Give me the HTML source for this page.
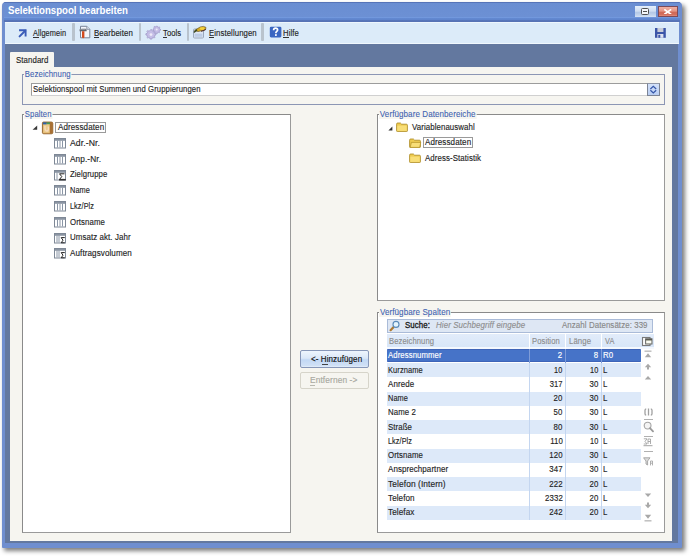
<!DOCTYPE html>
<html><head><meta charset="utf-8">
<style>
*{box-sizing:border-box}
html,body{margin:0;padding:0}
body{width:692px;height:559px;background:#fff;position:relative;overflow:hidden;font-family:"Liberation Sans",sans-serif;font-size:8px;color:#1e1e1e}
.a{position:absolute}
.t{position:absolute;white-space:nowrap;line-height:10px;font-size:9.2px;letter-spacing:0.1px;-webkit-text-stroke:.15px}
#win{left:2px;top:2px;width:679.6px;height:546.2px;background:#6f8ecf;border-radius:4px 4px 1px 1px;box-shadow:2.5px 3px 4px rgba(0,0,0,.5)}
#title{left:2px;top:1px;width:675.6px;height:19px;background:linear-gradient(#6a8ed2,#6c90d4 72%,#7399de 76%,#6289d2 80%,#5f84cc 88%,#546eb0 94%,#5a76b8)}
#tb{left:5px;top:21.5px;width:674.3px;height:22.5px;background:#dcebf9;border-top:1px solid #eef6fd;border-bottom:1px solid #f0f7fd}
#client{left:4.7px;top:44px;width:673.1px;height:499.3px;background:#63789f}
#page{left:10px;top:66.5px;width:662px;height:474.2px;background:#f6f5f0}
#tab{left:10px;top:52px;width:43.6px;height:15px;background:#f6f5f0;border-radius:1px 1px 0 0}
.grp{position:absolute;border:1px solid #8a8f98}
.gt{position:absolute;white-space:nowrap;line-height:10px;font-size:9.2px;letter-spacing:0.1px;-webkit-text-stroke:.1px;color:#3f63b0;background:#f6f5f0;padding:0 1px}
.sep{position:absolute;top:23px;width:2.6px;height:17.5px;background:#b9c3cd;border-radius:1px}
.u{text-decoration:underline}
</style></head><body>
<div id="win" class="a">
  <div id="title" class="a"></div>
  <div class="a" style="left:2px;top:0;width:675.6px;height:1px;background:#5674b8;border-radius:3px 3px 0 0"></div>
</div>
<div class="t" style="left:7.9px;top:4.5px;font-size:10.2px;font-weight:bold;color:#fff;line-height:11px;letter-spacing:0;-webkit-text-stroke:0;transform:scaleX(.946);transform-origin:0 0">Selektionspool bearbeiten</div>
<!-- window buttons -->
<div class="a" style="left:634.9px;top:5.9px;width:20.9px;height:10.8px;background:linear-gradient(#e4eefa,#d0def2 45%,#b4c8e6 60%,#c4d6ee 85%,#d8e4f4)"></div>
<div class="a" style="left:641px;top:8.4px;width:7.6px;height:6.2px;border:1.3px solid #505050;border-radius:1.5px;background:#f4f6fa"></div>
<div class="a" style="left:643px;top:10.9px;width:3.6px;height:1.4px;background:#505050"></div>
<div class="a" style="left:657.6px;top:6.3px;width:20.6px;height:10.8px;border:1px solid #7c4a58;background:linear-gradient(#eeb0a4,#e49484 45%,#d06a58 60%,#d46e5c 85%,#e09080)"></div>
<svg class="a" style="left:664.4px;top:8.6px" width="7.5" height="5.8" viewBox="0 0 7.5 5.8"><path d="M1 .9L6.5 4.9M6.5 .9L1 4.9" stroke="#fff" stroke-width="1.7" stroke-linecap="square"/></svg>
<div id="tb" class="a"></div>

<!-- toolbar items -->
<div class="sep" style="left:72.2px"></div>
<div class="sep" style="left:138.9px"></div>
<div class="sep" style="left:186.6px"></div>
<div class="sep" style="left:261.4px"></div>
<svg class="a" style="left:17px;top:27px" width="12" height="12" viewBox="0 0 12 12"><path d="M3 3.3H8.6V8.6" fill="none" stroke="#3a5cb8" stroke-width="1.9" stroke-linecap="square"/><path d="M8.2 3.8L2.6 9.4" stroke="#3a5cb8" stroke-width="2" stroke-linecap="round"/></svg>
<div class="t" style="left:33.2px;transform-origin:0 0;top:27.86px;transform:scaleX(0.802);">Allgemein</div>
<div class="a" style="left:33.2px;top:36.8px;width:5.5px;height:1px;background:#333"></div>
<svg class="a" style="left:78px;top:25px" width="14" height="15" viewBox="0 0 14 15"><path d="M2.5 1.3H8.8L11.8 4.3V12.8H2.5Z" fill="#f4f6fc" stroke="#7a8498" stroke-width="1"/><path d="M8.8 1.3V4.3H11.8" fill="#dfe4ee" stroke="#7a8498" stroke-width=".8"/><path d="M1.6 4.2Q3 3.6 5 3.8H7.6Q8.6 4 8.6 5.2V6.2H1.6Z" fill="#5e6168"/><path d="M2.2 4.6H7.6" stroke="#b8bcc4" stroke-width=".6"/><path d="M4 6.2H6.4V12.4Q5.2 14 4 12.4Z" fill="#d24a1e"/></svg>
<div class="t" style="left:94.3px;transform-origin:0 0;top:27.86px;transform:scaleX(0.856);">Bearbeiten</div>
<div class="a" style="left:94.3px;top:36.8px;width:5px;height:1px;background:#333"></div>
<svg class="a" style="left:144px;top:25px" width="18" height="15" viewBox="0 0 18 15"><g fill="#c4bde6" stroke="#9c94c4" stroke-width=".7"><path d="M6.6 4.8l1.1-.2.4 1.2 1 .4 1-.6.9.8-.6 1 .4 1 1.2.3v1.2l-1.2.3-.4 1 .6 1-.8.9-1-.6-1 .4-.3 1.2H6.1l-.3-1.2-1-.4-1 .6-.9-.8.6-1-.4-1-1.2-.3V8.7l1.2-.3.4-1-.6-1 .8-.9 1 .6 1-.4z"/><path d="M12.3 1.2l.9-.1.3.9.8.3.8-.5.7.6-.5.8.3.8.9.3v.9l-.9.3-.3.8.5.8-.6.7-.8-.5-.8.3-.3.9h-.9l-.3-.9-.8-.3-.8.5-.7-.6.5-.8-.3-.8-.9-.3V4l.9-.3.3-.8-.5-.8.6-.7.8.5.8-.3z"/></g><circle cx="7" cy="9.6" r="1.4" fill="#eeeaf8"/><circle cx="12.7" cy="4.6" r="1" fill="#eeeaf8"/></svg>
<div class="t" style="left:162.8px;transform-origin:0 0;top:27.86px;transform:scaleX(0.827);">Tools</div>
<div class="a" style="left:162.8px;top:36.8px;width:4.6px;height:1px;background:#333"></div>
<svg class="a" style="left:192px;top:24px" width="16" height="16" viewBox="0 0 16 16"><rect x="1.5" y="5" width="10" height="9" rx="1" fill="#dfe8f4" stroke="#9aa8bc" stroke-width="1"/><rect x="2.5" y="9.6" width="8" height="3.2" fill="#bccde6"/><path d="M2.6 6.5L5.5 4.6Q8 2.4 11.5 2.4L14 3.4 13.6 5.4Q11 7 8.5 7L6 7.6Z" fill="#d8ae22" stroke="#5e4a1c" stroke-width=".6"/><ellipse cx="10.2" cy="4.6" rx="2.4" ry="1.4" fill="#f2d040"/><path d="M2.4 8L4.6 6.2" stroke="#3a4a22" stroke-width="1.6" stroke-linecap="round"/><path d="M9 7.2Q11.5 7 13.8 5.4" stroke="#4a2a30" stroke-width="1.1" fill="none"/></svg>
<div class="t" style="left:208.6px;transform-origin:0 0;top:27.86px;transform:scaleX(0.846);">Einstellungen</div>
<div class="a" style="left:208.6px;top:36.8px;width:5px;height:1px;background:#333"></div>
<svg class="a" style="left:268.5px;top:26.3px" width="13" height="12" viewBox="0 0 13 12"><rect x=".8" y=".7" width="11.6" height="10.7" rx="1.4" fill="#3a66c2"/><path d="M4.6 4.2C4.6 2.8 5.5 2.1 6.6 2.1S8.6 2.8 8.6 4C8.6 5.3 6.9 5.5 6.9 6.8V7.2" fill="none" stroke="#fff" stroke-width="1.7"/><rect x="6" y="8.2" width="1.8" height="1.7" fill="#fff"/></svg>
<div class="t" style="left:283.3px;transform-origin:0 0;top:27.86px;transform:scaleX(0.842);">Hilfe</div>
<div class="a" style="left:283.3px;top:36.8px;width:5.6px;height:1px;background:#333"></div>
<svg class="a" style="left:653.5px;top:27px" width="13" height="12" viewBox="0 0 13 12"><path d="M1 1H11.8V10.8H1Z" fill="#3b55a8"/><rect x="3.4" y="1" width="6" height="4" fill="#c8ccd8"/><rect x="3.4" y="7" width="6" height="3.8" fill="#dde2f0"/><rect x="4.3" y="7.8" width="2" height="3" fill="#3b55a8"/></svg>
<div id="client" class="a"></div>
<div id="tab" class="a"></div>
<div id="page" class="a"></div>

<div class="t" style="left:16.2px;transform-origin:0 0;top:54.96px;transform:scaleX(0.853);color:#1e1e1e">Standard</div>
<!-- Bezeichnung group -->
<div class="grp" style="left:21.8px;top:74px;width:643.2px;height:30.9px;border-color:#8c96b4"></div>
<div class="gt" style="left:24.2px;transform-origin:0 0;top:68.76px;transform:scaleX(0.847);">Bezeichnung</div>
<div class="a" style="left:31.3px;top:83px;width:628.3px;height:12.6px;background:#fff;border:1px solid #9c9c9c;border-right-color:#c8c8c8;border-bottom-color:#d0d0d0"></div>
<div class="t" style="left:33px;transform-origin:0 0;top:84.06px;transform:scaleX(0.838);">Selektionspool mit Summen und Gruppierungen</div>
<div class="a" style="left:647px;top:83px;width:12.6px;height:12.6px;background:linear-gradient(#d4e2fa,#b8cdf2);border:1px solid #7c8494;border-top-color:#9098a8"></div><svg class="a" style="left:649px;top:85px" width="9" height="9" viewBox="0 0 9 9"><path d="M1.4 4L4.3 1.3 7.2 4M1.4 5.2L4.3 7.9 7.2 5.2" fill="none" stroke="#3456a8" stroke-width="1.2"/></svg>
<!-- Spalten group -->
<div class="grp" style="left:22.2px;top:114.3px;width:268.5px;height:418.3px;background:#fff;border-color:#8a8a8a #9a9a9a #9a9a9a #8a8a8a"></div>
<div class="gt" style="left:24.1px;transform-origin:0 0;top:108.76px;transform:scaleX(0.838);">Spalten</div>
<!-- Datenbereiche group -->
<div class="grp" style="left:377px;top:114.3px;width:287.7px;height:186.7px;background:#fff;border-color:#8a8a8a #9a9a9a #9a9a9a #8a8a8a"></div>
<div class="gt" style="left:379.2px;transform-origin:0 0;top:108.76px;transform:scaleX(0.872);">Verfügbare Datenbereiche</div>
<!-- Spalten grid group -->
<div class="grp" style="left:377px;top:312.4px;width:287.7px;height:220.3px;background:#fff;border-color:#8a8a8a #9a9a9a #9a9a9a #8a8a8a"></div>
<div class="gt" style="left:379.1px;transform-origin:0 0;top:306.76px;transform:scaleX(0.875);">Verfügbare Spalten</div>

<!--CONTENT-->
<svg class="a" style="left:32px;top:125px" width="6" height="6"><path d="M5.2 .6V4.8H.6Z" fill="#383838"/></svg>
<svg class="a" style="left:41px;top:120.5px" width="13" height="14" viewBox="0 0 13 14"><path d="M1.4 2.2Q1.4 1 2.6 1H10.2Q11.8 1 11.8 2.4V11.6Q11.8 12.8 10.4 12.8H2.8Q1.4 12.8 1.4 11.6Z" fill="#b8803c" stroke="#8a5a22" stroke-width=".8"/><path d="M2 2.6H8.8V12.2H2Z" fill="#e2b870"/><path d="M2.6 3.2H8.2V11.4H2.6Z" fill="#eccb8c"/><path d="M9 2H11.2V12.2H9Z" fill="#a87034"/><path d="M2 1.4H5.6V3.4H2Z" fill="#2c62ae"/><path d="M5.6 1.4H9V3.2H5.6Z" fill="#42985a"/><path d="M4 5Q3.6 9.8 6 10Q8 9.6 7.2 5.6" fill="none" stroke="#f6dcc0" stroke-width="1.3"/></svg>
<div class="a" style="left:55.4px;top:121.7px;width:50.6px;height:11px;border:1px solid #9a9a9a"></div>
<div class="t" style="left:57.9px;transform-origin:0 0;top:121.61px;transform:scaleX(0.877);">Adressdaten</div>
<svg class="a" style="left:54px;top:138.10px" width="13" height="11" viewBox="0 0 13 11"><rect x=".5" y=".5" width="11" height="9.5" fill="#fff" stroke="#7e8896"/><rect x="1" y="1" width="10" height="1.8" fill="#8a94a2"/><path d="M3.5 2.5V9.5M6 2.5V9.5M8.5 2.5V9.5" stroke="#8a96a6" stroke-width="1"/></svg>
<div class="t" style="left:70.4px;transform-origin:0 0;top:137.81px;transform:scaleX(0.942);">Adr.-Nr.</div>
<svg class="a" style="left:54px;top:153.84px" width="13" height="11" viewBox="0 0 13 11"><rect x=".5" y=".5" width="11" height="9.5" fill="#fff" stroke="#7e8896"/><rect x="1" y="1" width="10" height="1.8" fill="#8a94a2"/><path d="M3.5 2.5V9.5M6 2.5V9.5M8.5 2.5V9.5" stroke="#8a96a6" stroke-width="1"/></svg>
<div class="t" style="left:70.4px;transform-origin:0 0;top:153.55px;transform:scaleX(0.900);">Anp.-Nr.</div>
<svg class="a" style="left:54px;top:169.58px" width="13" height="11" viewBox="0 0 13 11"><rect x=".5" y=".5" width="11" height="9.5" fill="#fff" stroke="#7e8896"/><rect x="1" y="1" width="10" height="1.8" fill="#8a94a2"/><path d="M3 2.5V9.5" stroke="#8a96a6" stroke-width="1"/><path d="M10.5 3.8H5.5L7.8 6.6 5.5 9.4H10.5" fill="none" stroke="#222" stroke-width="1"/><rect x="5" y="9" width="6.8" height="1.5" fill="#333"/></svg>
<div class="t" style="left:70.4px;transform-origin:0 0;top:169.29px;transform:scaleX(0.841);">Zielgruppe</div>
<svg class="a" style="left:54px;top:185.32px" width="13" height="11" viewBox="0 0 13 11"><rect x=".5" y=".5" width="11" height="9.5" fill="#fff" stroke="#7e8896"/><rect x="1" y="1" width="10" height="1.8" fill="#8a94a2"/><path d="M3.5 2.5V9.5M6 2.5V9.5M8.5 2.5V9.5" stroke="#8a96a6" stroke-width="1"/></svg>
<div class="t" style="left:70.4px;transform-origin:0 0;top:185.03px;transform:scaleX(0.800);">Name</div>
<svg class="a" style="left:54px;top:201.06px" width="13" height="11" viewBox="0 0 13 11"><rect x=".5" y=".5" width="11" height="9.5" fill="#fff" stroke="#7e8896"/><rect x="1" y="1" width="10" height="1.8" fill="#8a94a2"/><path d="M3.5 2.5V9.5M6 2.5V9.5M8.5 2.5V9.5" stroke="#8a96a6" stroke-width="1"/></svg>
<div class="t" style="left:70.4px;transform-origin:0 0;top:200.77px;transform:scaleX(0.790);">Lkz/Plz</div>
<svg class="a" style="left:54px;top:216.80px" width="13" height="11" viewBox="0 0 13 11"><rect x=".5" y=".5" width="11" height="9.5" fill="#fff" stroke="#7e8896"/><rect x="1" y="1" width="10" height="1.8" fill="#8a94a2"/><path d="M3.5 2.5V9.5M6 2.5V9.5M8.5 2.5V9.5" stroke="#8a96a6" stroke-width="1"/></svg>
<div class="t" style="left:70.4px;transform-origin:0 0;top:216.51px;transform:scaleX(0.850);">Ortsname</div>
<svg class="a" style="left:54px;top:232.54px" width="13" height="11" viewBox="0 0 13 11"><rect x=".5" y=".5" width="11" height="9.5" fill="#fff" stroke="#7e8896"/><rect x="1" y="1" width="10" height="1.8" fill="#8a94a2"/><path d="M3 2.5V9.5M5 2.5V9.5" stroke="#8a96a6" stroke-width="1"/><path d="M10.8 4.6H7.2L9 7.2 7.2 9.8H10.8" fill="none" stroke="#222" stroke-width="1"/></svg>
<div class="t" style="left:70.4px;transform-origin:0 0;top:232.25px;transform:scaleX(0.860);">Umsatz akt. Jahr</div>
<svg class="a" style="left:54px;top:248.28px" width="13" height="11" viewBox="0 0 13 11"><rect x=".5" y=".5" width="11" height="9.5" fill="#fff" stroke="#7e8896"/><rect x="1" y="1" width="10" height="1.8" fill="#8a94a2"/><path d="M3 2.5V9.5M5 2.5V9.5" stroke="#8a96a6" stroke-width="1"/><path d="M10.8 4.6H7.2L9 7.2 7.2 9.8H10.8" fill="none" stroke="#222" stroke-width="1"/></svg>
<div class="t" style="left:70.4px;transform-origin:0 0;top:247.99px;transform:scaleX(0.879);">Auftragsvolumen</div>
<svg class="a" style="left:387.5px;top:126px" width="5" height="5"><path d="M4.4 .4V4.4H.4Z" fill="#303030"/></svg>
<svg class="a" style="left:395.5px;top:122px" width="12" height="10" viewBox="0 0 12 10"><path d="M.6 2.2Q.6 1 1.6 1H4.4L5.6 2.2H10.4Q11.4 2.2 11.4 3.2V8.8Q11.4 9.6 10.6 9.6H1.4Q.6 9.6 .6 8.8Z" fill="#eecb50" stroke="#a8861e" stroke-width=".8"/><path d="M1.3 3.6H10.7V8.9H1.3Z" fill="#f8de78"/></svg>
<div class="t" style="left:412.3px;transform-origin:0 0;top:121.61px;transform:scaleX(0.855);">Variablenauswahl</div>
<svg class="a" style="left:409px;top:137.5px" width="13" height="10" viewBox="0 0 13 10"><path d="M.6 2.2Q.6 1 1.6 1H4.4L5.6 2.2H10.4Q11.4 2.2 11.4 3.2V8.8Q11.4 9.6 10.6 9.6H1.4Q.6 9.6 .6 8.8Z" fill="#eecb50" stroke="#a8861e" stroke-width=".8"/><path d="M2.4 4.4H11.8L10.6 9.4H1.2Z" fill="#f8de78" stroke="#a8861e" stroke-width=".6"/></svg>
<div class="a" style="left:423.2px;top:137px;width:50.2px;height:11.2px;border:1px solid #9a9a9a"></div>
<div class="t" style="left:424.8px;transform-origin:0 0;top:137.21px;transform:scaleX(0.877);">Adressdaten</div>
<svg class="a" style="left:409px;top:153px" width="12" height="10" viewBox="0 0 12 10"><path d="M.6 2.2Q.6 1 1.6 1H4.4L5.6 2.2H10.4Q11.4 2.2 11.4 3.2V8.8Q11.4 9.6 10.6 9.6H1.4Q.6 9.6 .6 8.8Z" fill="#eecb50" stroke="#a8861e" stroke-width=".8"/><path d="M1.3 3.6H10.7V8.9H1.3Z" fill="#f8de78"/></svg>
<div class="t" style="left:425.3px;transform-origin:0 0;top:152.81px;transform:scaleX(0.857);">Adress-Statistik</div>
<div class="a" style="left:300.2px;top:350.2px;width:68.8px;height:17.7px;border:1px solid #8797b8;border-radius:2px;background:linear-gradient(#eef5fd,#dbe8f8 45%,#c2d8f4 55%,#cfe0f6 90%,#e4eefa)"></div>
<div class="t" style="left:310.6px;transform-origin:0 0;top:354.11px;transform:scaleX(0.871);color:#111">&lt;- Hinzufügen</div>
<div class="a" style="left:322px;top:363.6px;width:5.5px;height:1px;background:#444"></div>
<div class="a" style="left:300.2px;top:371.6px;width:68.8px;height:17.3px;border:1px solid #d6d4ca;border-radius:2px;background:#f6f5f0"></div>
<div class="t" style="left:310.0px;transform-origin:0 0;top:375.01px;transform:scaleX(0.912);color:#a8a8a0">Entfernen -&gt;</div>
<div class="a" style="left:310px;top:384.6px;width:5px;height:1px;background:#b8b8b0"></div>
<div class="a" style="left:387.2px;top:319px;width:265.8px;height:13.8px;background:#dee7f4;border:1px solid #aabbd8"></div>
<svg class="a" style="left:389px;top:320px" width="11" height="12" viewBox="0 0 11 12"><path d="M4.4 7.2L1.6 10.2" stroke="#b07a30" stroke-width="2.2" stroke-linecap="round"/><circle cx="7" cy="4.4" r="3" fill="#e4f4fc" stroke="#5a8ab8" stroke-width="1.1"/></svg>
<div class="t" style="left:405.2px;transform-origin:0 0;top:320.41px;transform:scaleX(0.855);color:#1a1a1a;-webkit-text-stroke:.35px">Suche:</div>
<div class="t" style="left:436px;transform-origin:0 0;top:320.41px;transform:scaleX(0.861);font-style:italic;color:#8e8e8e">Hier Suchbegriff eingebe</div>
<div class="t" style="left:562px;transform-origin:0 0;top:320.41px;transform:scaleX(0.858);color:#888">Anzahl Datensätze: 339</div>
<div class="a" style="left:387.2px;top:333.7px;width:267px;height:15.1px;background:linear-gradient(#e2ecfa,#d8e6f8 85%,#f4f8fe 90%)"></div>
<div class="a" style="left:528.9px;top:333.7px;width:1px;height:15.1px;background:#fff"></div>
<div class="a" style="left:565.4px;top:333.7px;width:1px;height:15.1px;background:#fff"></div>
<div class="a" style="left:601.1px;top:333.7px;width:1px;height:15.1px;background:#fff"></div>
<div class="t" style="left:389.2px;transform-origin:0 0;top:335.71px;transform:scaleX(0.831);color:#8c8c8c">Bezeichnung</div>
<div class="t" style="left:531.5px;transform-origin:0 0;top:335.71px;transform:scaleX(0.830);color:#8c8c8c">Position</div>
<div class="t" style="left:568.9px;transform-origin:0 0;top:335.71px;transform:scaleX(0.846);color:#8c8c8c">Länge</div>
<div class="t" style="left:605.3px;transform-origin:0 0;top:335.71px;transform:scaleX(0.800);color:#8c8c8c">VA</div>
<div class="a" style="left:387.2px;top:348.80px;width:254.3px;height:13.65px;background:#4673c8;border-top:1px solid #3e64b8;border-bottom:1px solid #3e64b8;border-radius:1px"></div>
<div class="a" style="left:528.9px;top:348.80px;width:1px;height:14.25px;background:#7e9cd8"></div>
<div class="a" style="left:565.4px;top:348.80px;width:1px;height:14.25px;background:#7e9cd8"></div>
<div class="a" style="left:601.1px;top:348.80px;width:1px;height:14.25px;background:#7e9cd8"></div>
<div class="t" style="left:387.8px;transform-origin:0 0;top:350.41px;transform:scaleX(0.844);color:#fff">Adressnummer</div>
<div class="t" style="right:129.5px;transform-origin:100% 0;top:350.41px;transform:scaleX(0.853);color:#fff">2</div>
<div class="t" style="right:93.5px;transform-origin:100% 0;top:350.41px;transform:scaleX(0.853);color:#fff">8</div>
<div class="t" style="left:603.4px;transform-origin:0 0;top:350.41px;transform:scaleX(0.853);color:#fff">R0</div>
<div class="a" style="left:387.2px;top:363.05px;width:254.3px;height:14.25px;background:#dde9f9"></div>
<div class="a" style="left:528.9px;top:363.05px;width:1px;height:14.25px;background:#c4d6f0"></div>
<div class="a" style="left:565.4px;top:363.05px;width:1px;height:14.25px;background:#c4d6f0"></div>
<div class="a" style="left:601.1px;top:363.05px;width:1px;height:14.25px;background:#c4d6f0"></div>
<div class="t" style="left:387.8px;transform-origin:0 0;top:364.66px;transform:scaleX(0.814);color:#1e1e1e">Kurzname</div>
<div class="t" style="right:129.5px;transform-origin:100% 0;top:364.66px;transform:scaleX(0.800);color:#1e1e1e">10</div>
<div class="t" style="right:93.5px;transform-origin:100% 0;top:364.66px;transform:scaleX(0.800);color:#1e1e1e">10</div>
<div class="t" style="left:603.4px;transform-origin:0 0;top:364.66px;transform:scaleX(0.853);color:#1e1e1e">L</div>
<div class="a" style="left:387.2px;top:377.30px;width:254.3px;height:14.25px;background:#ffffff"></div>
<div class="a" style="left:528.9px;top:377.30px;width:1px;height:14.25px;background:#c4d6f0"></div>
<div class="a" style="left:565.4px;top:377.30px;width:1px;height:14.25px;background:#c4d6f0"></div>
<div class="a" style="left:601.1px;top:377.30px;width:1px;height:14.25px;background:#c4d6f0"></div>
<div class="t" style="left:387.8px;transform-origin:0 0;top:378.91px;transform:scaleX(0.867);color:#1e1e1e">Anrede</div>
<div class="t" style="right:129.5px;transform-origin:100% 0;top:378.91px;transform:scaleX(0.825);color:#1e1e1e">317</div>
<div class="t" style="right:93.5px;transform-origin:100% 0;top:378.91px;transform:scaleX(0.853);color:#1e1e1e">30</div>
<div class="t" style="left:603.4px;transform-origin:0 0;top:378.91px;transform:scaleX(0.853);color:#1e1e1e">L</div>
<div class="a" style="left:387.2px;top:391.55px;width:254.3px;height:14.25px;background:#dde9f9"></div>
<div class="a" style="left:528.9px;top:391.55px;width:1px;height:14.25px;background:#c4d6f0"></div>
<div class="a" style="left:565.4px;top:391.55px;width:1px;height:14.25px;background:#c4d6f0"></div>
<div class="a" style="left:601.1px;top:391.55px;width:1px;height:14.25px;background:#c4d6f0"></div>
<div class="t" style="left:387.8px;transform-origin:0 0;top:393.16px;transform:scaleX(0.800);color:#1e1e1e">Name</div>
<div class="t" style="right:129.5px;transform-origin:100% 0;top:393.16px;transform:scaleX(0.853);color:#1e1e1e">20</div>
<div class="t" style="right:93.5px;transform-origin:100% 0;top:393.16px;transform:scaleX(0.853);color:#1e1e1e">30</div>
<div class="t" style="left:603.4px;transform-origin:0 0;top:393.16px;transform:scaleX(0.853);color:#1e1e1e">L</div>
<div class="a" style="left:387.2px;top:405.80px;width:254.3px;height:14.25px;background:#ffffff"></div>
<div class="a" style="left:528.9px;top:405.80px;width:1px;height:14.25px;background:#c4d6f0"></div>
<div class="a" style="left:565.4px;top:405.80px;width:1px;height:14.25px;background:#c4d6f0"></div>
<div class="a" style="left:601.1px;top:405.80px;width:1px;height:14.25px;background:#c4d6f0"></div>
<div class="t" style="left:387.8px;transform-origin:0 0;top:407.41px;transform:scaleX(0.853);color:#1e1e1e">Name 2</div>
<div class="t" style="right:129.5px;transform-origin:100% 0;top:407.41px;transform:scaleX(0.853);color:#1e1e1e">50</div>
<div class="t" style="right:93.5px;transform-origin:100% 0;top:407.41px;transform:scaleX(0.853);color:#1e1e1e">30</div>
<div class="t" style="left:603.4px;transform-origin:0 0;top:407.41px;transform:scaleX(0.853);color:#1e1e1e">L</div>
<div class="a" style="left:387.2px;top:420.05px;width:254.3px;height:14.25px;background:#dde9f9"></div>
<div class="a" style="left:528.9px;top:420.05px;width:1px;height:14.25px;background:#c4d6f0"></div>
<div class="a" style="left:565.4px;top:420.05px;width:1px;height:14.25px;background:#c4d6f0"></div>
<div class="a" style="left:601.1px;top:420.05px;width:1px;height:14.25px;background:#c4d6f0"></div>
<div class="t" style="left:387.8px;transform-origin:0 0;top:421.66px;transform:scaleX(0.850);color:#1e1e1e">Straße</div>
<div class="t" style="right:129.5px;transform-origin:100% 0;top:421.66px;transform:scaleX(0.853);color:#1e1e1e">80</div>
<div class="t" style="right:93.5px;transform-origin:100% 0;top:421.66px;transform:scaleX(0.853);color:#1e1e1e">30</div>
<div class="t" style="left:603.4px;transform-origin:0 0;top:421.66px;transform:scaleX(0.853);color:#1e1e1e">L</div>
<div class="a" style="left:387.2px;top:434.30px;width:254.3px;height:14.25px;background:#ffffff"></div>
<div class="a" style="left:528.9px;top:434.30px;width:1px;height:14.25px;background:#c4d6f0"></div>
<div class="a" style="left:565.4px;top:434.30px;width:1px;height:14.25px;background:#c4d6f0"></div>
<div class="a" style="left:601.1px;top:434.30px;width:1px;height:14.25px;background:#c4d6f0"></div>
<div class="t" style="left:387.8px;transform-origin:0 0;top:435.91px;transform:scaleX(0.790);color:#1e1e1e">Lkz/Plz</div>
<div class="t" style="right:129.5px;transform-origin:100% 0;top:435.91px;transform:scaleX(0.853);color:#1e1e1e">110</div>
<div class="t" style="right:93.5px;transform-origin:100% 0;top:435.91px;transform:scaleX(0.800);color:#1e1e1e">10</div>
<div class="t" style="left:603.4px;transform-origin:0 0;top:435.91px;transform:scaleX(0.853);color:#1e1e1e">L</div>
<div class="a" style="left:387.2px;top:448.55px;width:254.3px;height:14.25px;background:#dde9f9"></div>
<div class="a" style="left:528.9px;top:448.55px;width:1px;height:14.25px;background:#c4d6f0"></div>
<div class="a" style="left:565.4px;top:448.55px;width:1px;height:14.25px;background:#c4d6f0"></div>
<div class="a" style="left:601.1px;top:448.55px;width:1px;height:14.25px;background:#c4d6f0"></div>
<div class="t" style="left:387.8px;transform-origin:0 0;top:450.16px;transform:scaleX(0.850);color:#1e1e1e">Ortsname</div>
<div class="t" style="right:129.5px;transform-origin:100% 0;top:450.16px;transform:scaleX(0.853);color:#1e1e1e">120</div>
<div class="t" style="right:93.5px;transform-origin:100% 0;top:450.16px;transform:scaleX(0.853);color:#1e1e1e">30</div>
<div class="t" style="left:603.4px;transform-origin:0 0;top:450.16px;transform:scaleX(0.853);color:#1e1e1e">L</div>
<div class="a" style="left:387.2px;top:462.80px;width:254.3px;height:14.25px;background:#ffffff"></div>
<div class="a" style="left:528.9px;top:462.80px;width:1px;height:14.25px;background:#c4d6f0"></div>
<div class="a" style="left:565.4px;top:462.80px;width:1px;height:14.25px;background:#c4d6f0"></div>
<div class="a" style="left:601.1px;top:462.80px;width:1px;height:14.25px;background:#c4d6f0"></div>
<div class="t" style="left:387.8px;transform-origin:0 0;top:464.41px;transform:scaleX(0.867);color:#1e1e1e">Ansprechpartner</div>
<div class="t" style="right:129.5px;transform-origin:100% 0;top:464.41px;transform:scaleX(0.853);color:#1e1e1e">347</div>
<div class="t" style="right:93.5px;transform-origin:100% 0;top:464.41px;transform:scaleX(0.853);color:#1e1e1e">30</div>
<div class="t" style="left:603.4px;transform-origin:0 0;top:464.41px;transform:scaleX(0.853);color:#1e1e1e">L</div>
<div class="a" style="left:387.2px;top:477.05px;width:254.3px;height:14.25px;background:#dde9f9"></div>
<div class="a" style="left:528.9px;top:477.05px;width:1px;height:14.25px;background:#c4d6f0"></div>
<div class="a" style="left:565.4px;top:477.05px;width:1px;height:14.25px;background:#c4d6f0"></div>
<div class="a" style="left:601.1px;top:477.05px;width:1px;height:14.25px;background:#c4d6f0"></div>
<div class="t" style="left:387.8px;transform-origin:0 0;top:478.66px;transform:scaleX(0.911);color:#1e1e1e">Telefon (Intern)</div>
<div class="t" style="right:129.5px;transform-origin:100% 0;top:478.66px;transform:scaleX(0.853);color:#1e1e1e">222</div>
<div class="t" style="right:93.5px;transform-origin:100% 0;top:478.66px;transform:scaleX(0.853);color:#1e1e1e">20</div>
<div class="t" style="left:603.4px;transform-origin:0 0;top:478.66px;transform:scaleX(0.853);color:#1e1e1e">L</div>
<div class="a" style="left:387.2px;top:491.30px;width:254.3px;height:14.25px;background:#ffffff"></div>
<div class="a" style="left:528.9px;top:491.30px;width:1px;height:14.25px;background:#c4d6f0"></div>
<div class="a" style="left:565.4px;top:491.30px;width:1px;height:14.25px;background:#c4d6f0"></div>
<div class="a" style="left:601.1px;top:491.30px;width:1px;height:14.25px;background:#c4d6f0"></div>
<div class="t" style="left:387.8px;transform-origin:0 0;top:492.91px;transform:scaleX(0.880);color:#1e1e1e">Telefon</div>
<div class="t" style="right:129.5px;transform-origin:100% 0;top:492.91px;transform:scaleX(0.853);color:#1e1e1e">2332</div>
<div class="t" style="right:93.5px;transform-origin:100% 0;top:492.91px;transform:scaleX(0.853);color:#1e1e1e">20</div>
<div class="t" style="left:603.4px;transform-origin:0 0;top:492.91px;transform:scaleX(0.853);color:#1e1e1e">L</div>
<div class="a" style="left:387.2px;top:505.55px;width:254.3px;height:14.25px;background:#dde9f9"></div>
<div class="a" style="left:528.9px;top:505.55px;width:1px;height:14.25px;background:#c4d6f0"></div>
<div class="a" style="left:565.4px;top:505.55px;width:1px;height:14.25px;background:#c4d6f0"></div>
<div class="a" style="left:601.1px;top:505.55px;width:1px;height:14.25px;background:#c4d6f0"></div>
<div class="t" style="left:387.8px;transform-origin:0 0;top:507.16px;transform:scaleX(0.890);color:#1e1e1e">Telefax</div>
<div class="t" style="right:129.5px;transform-origin:100% 0;top:507.16px;transform:scaleX(0.853);color:#1e1e1e">242</div>
<div class="t" style="right:93.5px;transform-origin:100% 0;top:507.16px;transform:scaleX(0.853);color:#1e1e1e">20</div>
<div class="t" style="left:603.4px;transform-origin:0 0;top:507.16px;transform:scaleX(0.853);color:#1e1e1e">L</div>
<svg class="a" style="left:641px;top:336px" width="12" height="11" viewBox="0 0 12 11"><rect x="1.5" y="1.5" width="7.5" height="8" fill="#fafafa" stroke="#7a7a7a" stroke-width="1.1"/><rect x="4.6" y="2.8" width="6.4" height="5.2" fill="#e8ecd8" stroke="#6a6a6a" stroke-width="1"/><rect x="4.6" y="2.8" width="6.4" height="1.6" fill="#5a5a50"/><rect x="5.6" y="5" width="4.4" height="2" fill="#fbfbf4"/></svg>
<svg class="a" style="left:644px;top:350px" width="8" height="8" viewBox="0 0 8 8"><rect x=".5" y=".6" width="7" height="1.1" fill="#a8a8a8"/><path d="M.8 7.2L4 3.2 7.2 7.2Z" fill="#a8a8a8"/></svg>
<svg class="a" style="left:644px;top:362.5px" width="8" height="7" viewBox="0 0 8 7"><path d="M.8 4.2L4 .8 7.2 4.2H5V6.6H3V4.2Z" fill="#a8a8a8"/></svg>
<svg class="a" style="left:644px;top:375px" width="8" height="5" viewBox="0 0 8 5"><path d="M.8 4.4L4 1 7.2 4.4Z" fill="#a8a8a8"/></svg>
<svg class="a" style="left:644px;top:407.5px" width="9" height="8" viewBox="0 0 9 8"><path d="M2.2 .8Q1 1 1 2.2V5.8Q1 7 2.2 7.2M6.8 .8Q8 1 8 2.2V5.8Q8 7 6.8 7.2M4.5 .6V7.4" fill="none" stroke="#a0a0a0" stroke-width="1.3"/></svg>
<div class="a" style="left:643.5px;top:419px;width:9px;height:1px;background:#b0b0b0"></div>
<svg class="a" style="left:642.5px;top:421px" width="11" height="12" viewBox="0 0 11 12"><circle cx="4.6" cy="4.6" r="3.4" fill="#f4f4f4" stroke="#a4a4a4" stroke-width="1.1"/><path d="M7 7.2L10 10.4" stroke="#9a9a9a" stroke-width="1.8" stroke-linecap="round"/></svg>
<div class="a" style="left:643.5px;top:435.6px;width:9px;height:1px;background:#b0b0b0"></div>
<svg class="a" style="left:643px;top:438px" width="10" height="9" viewBox="0 0 10 9"><path d="M.8 .8H4L2 3.4 4 6H.8M5 1V6M7.5 1V6M5 1H7.5M5 3.5H7.5" fill="none" stroke="#a4a4a4" stroke-width=".9"/><rect x=".5" y="7.2" width="9" height="1" fill="#a4a4a4"/></svg>
<div class="a" style="left:643.5px;top:451px;width:9px;height:1px;background:#b0b0b0"></div>
<svg class="a" style="left:642.5px;top:456.5px" width="11" height="9" viewBox="0 0 11 9"><path d="M.6 .8H7L4.6 4V8L3 7V4Z" fill="#dcdcdc" stroke="#a0a0a0" stroke-width=".9"/><path d="M7.5 4V8.4M9.5 4V8.4M7.5 4H9.5M7.5 6.2H9.5" stroke="#a8a8a8" stroke-width=".9"/></svg>
<svg class="a" style="left:644px;top:492.5px" width="8" height="5" viewBox="0 0 8 5"><path d="M.8.6L4 4 7.2.6Z" fill="#a8a8a8"/></svg>
<svg class="a" style="left:644px;top:502px" width="8" height="7" viewBox="0 0 8 7"><path d="M.8 2.8L4 6.2 7.2 2.8H5V.4H3V2.8Z" fill="#a8a8a8"/></svg>
<svg class="a" style="left:644px;top:514px" width="8" height="8" viewBox="0 0 8 8"><path d="M.8 .8L4 4.8 7.2 .8Z" fill="#a8a8a8"/><rect x=".5" y="6.3" width="7" height="1.1" fill="#a8a8a8"/></svg>
<!--/CONTENT-->
</body></html>
